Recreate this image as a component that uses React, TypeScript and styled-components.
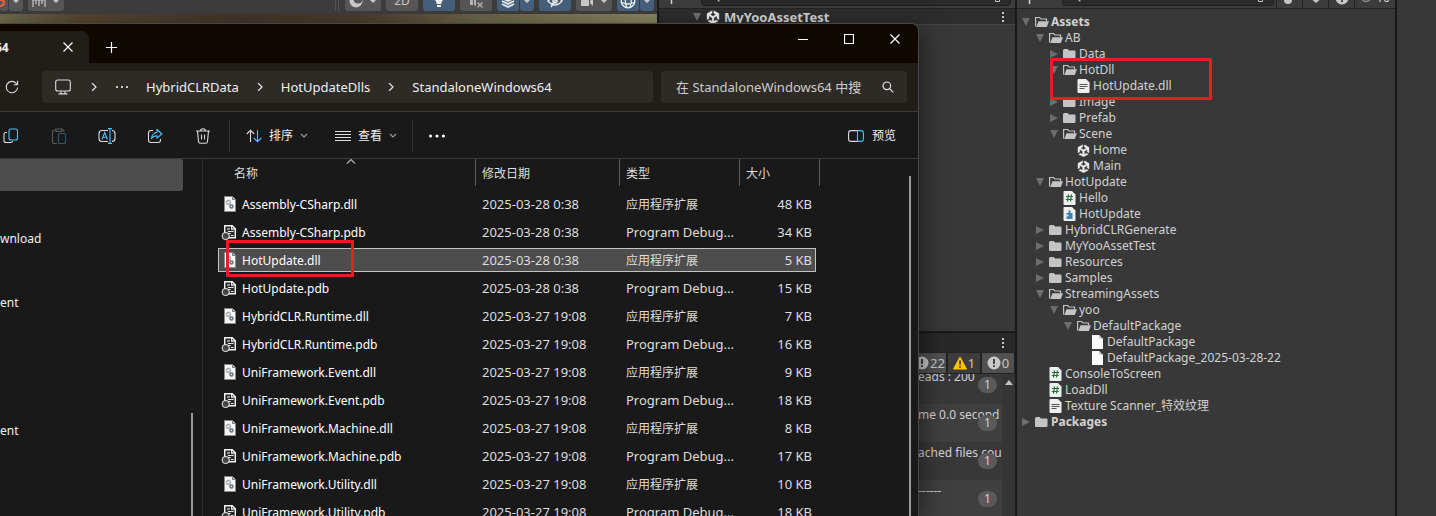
import React from "react";
import styled, { createGlobalStyle, css } from "styled-components";

const GlobalStyle = createGlobalStyle`
  * { box-sizing: border-box; }
  body {
    margin: 0;
    background: #383838;
    color: #d2d2d2;
    font-family: "Noto Sans", "Noto Sans CJK SC", sans-serif;
    font-size: 12px;
  }
  button, input { font: inherit; color: inherit; }
  button { border: 0; padding: 0; background: none; }
  ul { list-style: none; margin: 0; padding: 0; }
  svg { display: block; flex: none; }
`;

/* ---------- editor shell ---------- */

const Editor = styled.main`
  position: relative;
  display: grid;
  grid-template-columns: minmax(0, 1fr) 358px 380px 39px;
  height: 100vh;
  min-height: 440px;
  overflow: hidden;
`;

const Pane = styled.section`
  display: flex;
  flex-direction: column;
  min-width: 0;
  min-height: 0;
  background: #383838;
  border-right: 2px solid #191919;
`;

const SidePane = styled.aside`
  background: #383838;
`;

const SceneToolbar = styled.div`
  display: flex;
  align-items: flex-end;
  gap: 5px;
  height: 14px;
  padding: 0 3px 3px 0;
  overflow: hidden;
  background: #3d3d3d;
`;

const ToolGroup = styled.div`
  display: flex;
  gap: 1px;
`;

const ToolButton = styled.button<{ $w: number; $on?: boolean }>`
  display: flex;
  align-items: center;
  justify-content: center;
  gap: 6px;
  width: ${(p) => p.$w}px;
  height: 20px;
  border-radius: 3px;
  background: ${(p) => (p.$on ? "#46607c" : "#575757")};
  color: #c8c8c8;
  line-height: 16px;
`;

const Grip = styled.span`
  width: 4px;
  height: 20px;
  margin-left: auto;
  margin-right: 1px;
  border: solid #555;
  border-width: 0 1px;
`;

const SceneView = styled.div`
  flex: 1;
  background: linear-gradient(90deg, #6d6a4c 0, #54462f 80px, #40352a 240px, #4a3d2c 360px, #6a6448 480px, #85845f 100%);
`;

const PaneToolbar = styled.div`
  display: flex;
  align-items: flex-end;
  height: 9px;
  overflow: hidden;
  background: #3c3c3c;
  border-bottom: 1px solid #232323;
`;

const PlusSlot = styled.button`
  display: flex;
  align-items: center;
  justify-content: center;
  width: 24px;
  height: 20px;
`;

const SearchField = styled.div<{ $ml: number; $mr: number }>`
  display: flex;
  align-items: center;
  justify-content: space-between;
  flex: 1;
  height: 20px;
  margin: 0 ${(p) => p.$mr}px 2px ${(p) => p.$ml}px;
  padding: 0 3px 0 6px;
  border: 1px solid #1f1f1f;
  border-radius: 4px;
  background: #2a2a2a;
`;

const ToolbarSlot = styled.div<{ $w: number }>`
  display: flex;
  align-items: center;
  justify-content: center;
  gap: 4px;
  width: ${(p) => p.$w}px;
  height: 21px;
  border-left: 1px solid #232323;
  line-height: 16px;
`;

/* ---------- hierarchy ---------- */

const SceneHeader = styled.div`
  display: flex;
  align-items: center;
  height: 16px;
  gap: 4px;
  padding: 0 10px 0 33px;
  background: #2d2d2d;
  border-bottom: 1px solid #454545;
  font-size: 13px;
  font-weight: 700;
  line-height: 16px;
`;

const SceneName = styled.span`
  flex: 1;
`;

const HierarchyBody = styled.div`
  height: 308px;
  border-bottom: 2px solid #191919;
`;

/* ---------- console ---------- */

const ConsoleTab = styled.div`
  display: flex;
  align-items: center;
  justify-content: flex-end;
  height: 19px;
  padding-right: 10px;
  background: #282828;
`;

const ConsoleBar = styled.div`
  display: flex;
  justify-content: flex-end;
  gap: 2px;
  height: 22px;
  padding: 1px 1px 1px 0;
  background: #232323;
`;

const CountToggle = styled.button<{ $on?: boolean }>`
  display: flex;
  align-items: center;
  justify-content: center;
  gap: 1px;
  width: 32px;
  height: 20px;
  background: ${(p) => (p.$on ? "#505050" : "#3c3c3c")};
  color: #c4c4c4;
  font-size: 13px;
  line-height: 16px;
`;

const ConsoleBody = styled.div`
  display: flex;
  flex: 1;
  min-height: 0;
`;

const LogList = styled.ul`
  flex: 1;
  overflow: hidden;
`;

const LogRow = styled.li<{ $first?: boolean }>`
  position: relative;
  height: ${(p) => (p.$first ? 30 : 38)}px;
  padding-left: 259px;
  overflow: hidden;
  white-space: nowrap;
  line-height: 22px;
  background: #383838;
  &:nth-child(even) { background: #3f3f3f; }
  ${(p) =>
    p.$first &&
    css`
      line-height: 6px;
    `}
`;

const LogBadge = styled.span`
  position: absolute;
  right: 5px;
  bottom: 11px;
  width: 19px;
  height: 16px;
  border-radius: 8px;
  background: #5a5a5a;
  text-align: center;
  font-size: 12px;
  line-height: 16px;
`;

const ConsoleScroll = styled.div`
  display: flex;
  justify-content: center;
  width: 13px;
  padding-top: 6px;
  background: #353535;
`;

/* ---------- project tree ---------- */

const TreeArea = styled.div`
  position: relative;
  padding-top: 5px;
`;

const TreeRow = styled.li<{ $depth: number }>`
  display: flex;
  align-items: center;
  height: 16px;
  padding-left: ${(p) => 3 + p.$depth * 14}px;
  font-size: 12px;
  font-weight: ${(p) => (p.$depth === 0 ? 700 : 400)};
  line-height: 16px;
  white-space: nowrap;
`;

const ArrowSlot = styled.span`
  display: flex;
  justify-content: center;
  width: 12px;
  margin-right: 3px;
`;

const IconSlot = styled.span`
  display: flex;
  width: 16px;
`;

const Highlight = styled.div<{ $x: number; $y: number; $w: number; $h: number }>`
  position: absolute;
  left: ${(p) => p.$x}px;
  top: ${(p) => p.$y}px;
  width: ${(p) => p.$w}px;
  height: ${(p) => p.$h}px;
  border: 3px solid #ed1c24;
  pointer-events: none;
`;

/* ---------- file explorer window ---------- */

const Explorer = styled.section`
  position: absolute;
  top: 23px;
  bottom: 0;
  left: 0;
  right: 517px;
  display: flex;
  flex-direction: column;
  border: solid #474747;
  border-width: 1px 1px 0 0;
  border-top-right-radius: 8px;
  overflow: hidden;
  background: #191919;
  color: #f0f0f0;
`;

const ExplorerShadow = styled.div`
  position: absolute;
  top: 30px;
  bottom: 0;
  left: 0;
  right: 518px;
  box-shadow: 2px 2px 22px 2px rgba(0, 0, 0, 0.5);
`;

const TitleBar = styled.header`
  display: flex;
  align-items: flex-end;
  height: 39px;
  background: #0f0800;
`;

const ActiveTab = styled.div`
  display: flex;
  align-items: center;
  justify-content: space-between;
  width: 89px;
  height: 32px;
  padding-right: 16px;
  border-top-right-radius: 8px;
  background: #211d19;
  font-weight: 700;
  text-indent: -5px;
`;

const IconButton = styled.button<{ $w: number; $h: number }>`
  display: flex;
  align-items: center;
  justify-content: center;
  width: ${(p) => p.$w}px;
  height: ${(p) => p.$h}px;
`;

const WindowControls = styled.div`
  display: flex;
  align-self: flex-start;
  margin-left: auto;
`;

const NavBar = styled.nav`
  display: flex;
  align-items: center;
  gap: 8px;
  height: 49px;
  padding-right: 11px;
  background: #211d19;
  border-bottom: 1px solid #3a3835;
`;

const RefreshSlot = styled.div`
  width: 34px;
`;

const AddressBar = styled.div`
  display: flex;
  align-items: center;
  flex: 1;
  height: 32px;
  border-radius: 4px;
  background: #2e2a26;
  font-size: 13px;
`;

const Crumb = styled.a`
  color: inherit;
  text-decoration: none;
  white-space: nowrap;
`;

const CrumbArrow = styled.span<{ $w: number }>`
  display: flex;
  justify-content: center;
  width: ${(p) => p.$w}px;
`;

const CrumbMore = styled(CrumbArrow)`
  margin-right: 6px;
`;

const SearchBox = styled.label`
  display: flex;
  align-items: center;
  justify-content: space-between;
  width: 246px;
  height: 32px;
  padding: 0 13px 0 15px;
  border-radius: 4px;
  background: #2e2a26;
`;

const SearchInput = styled.input`
  width: 186px;
  padding: 0;
  border: 0;
  outline: 0;
  background: none;
  font-size: 13px;
  &::placeholder { color: #cfcdcb; opacity: 1; }
`;

const CommandBar = styled.div`
  display: flex;
  align-items: center;
  height: 47px;
  padding-top: 2px;
  border-bottom: 1px solid #3a3a3a;
`;

const CommandGroup = styled.div`
  display: flex;
  gap: 16px;
  margin-left: -5px;
`;

const CommandRule = styled.span<{ $ml: number }>`
  width: 1px;
  height: 32px;
  margin-left: ${(p) => p.$ml}px;
  background: #333;
`;

const TextCommand = styled.button<{ $ml: number }>`
  display: flex;
  align-items: center;
  gap: 7px;
  height: 32px;
  margin-left: ${(p) => p.$ml}px;
  line-height: 16px;
`;

const PreviewCommand = styled(TextCommand)`
  gap: 8px;
  margin-left: auto;
  margin-right: 22px;
`;

const ExplorerBody = styled.div`
  display: flex;
  flex: 1;
  min-height: 0;
`;

const NavTree = styled.ul`
  position: relative;
  width: 203px;
  flex: none;
  border-right: 1px solid #2d2d2d;
`;

const NavItem = styled.li<{ $selected?: boolean }>`
  width: 183px;
  height: 32px;
  line-height: 32px;
  border-radius: 0 2px 2px 0;
  background: ${(p) => (p.$selected ? "#4d4d4d" : "none")};
`;

const ScrollThumb = styled.span<{ $top: number; $right: number }>`
  position: absolute;
  top: ${(p) => p.$top}px;
  right: ${(p) => p.$right}px;
  bottom: 0;
  width: 2px;
  background: #9a9a9a;
`;

const FileArea = styled.div`
  position: relative;
  flex: 1;
  min-width: 0;
  overflow: hidden;
`;

const FileTable = styled.table`
  width: 602px;
  margin-left: 15px;
  table-layout: fixed;
  border-collapse: separate;
  border-spacing: 0;
`;

const HeadCell = styled.th<{ $w: number; $pad: number }>`
  position: relative;
  width: ${(p) => p.$w}px;
  height: 27px;
  padding: 0 0 0 ${(p) => p.$pad}px;
  border-right: 1px solid #5e5e5e;
  text-align: left;
  font-weight: 400;
  color: #dedede;
`;

const SortMark = styled.span`
  position: absolute;
  top: 0;
  right: 119px;
`;

const Cell = styled.td`
  height: 28px;
  padding: 0;
  &:last-child { padding-right: 4px; }
`;

const CellBox = styled.div<{ $selected?: boolean; $edge?: "start" | "end"; $pad?: number }>`
  display: flex;
  align-items: center;
  height: 24px;
  padding: 0 3px 0 ${(p) => p.$pad ?? 6}px;
  border: solid transparent;
  border-width: 1px ${(p) => (p.$edge === "end" ? 1 : 0)}px 1px ${(p) => (p.$edge === "start" ? 1 : 0)}px;
  justify-content: ${(p) => (p.$edge === "end" ? "flex-end" : "flex-start")};
  gap: 5px;
  white-space: nowrap;
  ${(p) =>
    p.$selected &&
    css`
      background: #4d4d4d;
      border-color: #c4c4c4;
    `}
`;

const FileRows = styled.tbody`
  font-size: 13px;
  line-height: 20px;
  color: #dedede;
  &::before { content: ""; display: block; height: 4px; }
`;

const SmallText = styled.span<{ $bright?: boolean }>`
  padding-top: 2px;
  color: ${(p) => (p.$bright ? "#fff" : "inherit")};
  font-size: 12px;
`;

/* ---------- icons ---------- */

const Arrow = ({ open }: { open: boolean }) => (
  <svg width="10" height="10" viewBox="0 0 10 10">
    <path d={open ? "M1 1h8L5 9z" : "M1 1v8l8-4z"} fill="#6e6e6e" />
  </svg>
);

const Caret = () => (
  <svg width="8" height="6" viewBox="0 0 8 6">
    <path d="M0 1h8L4 5z" fill="#c8c8c8" />
  </svg>
);

const FolderIcon = () => (
  <svg width="13" height="12" viewBox="0 0 13 12">
    <path d="M0 2.500Q0 1 1.500 1h3L6 2.500h5.500Q12.500 2.500 12.500 3.500V10q0 1-1 1H1q-1 0-1-1z" fill="#c4c4c4" />
  </svg>
);

const FolderOpenIcon = () => (
  <svg width="15" height="12" viewBox="0 0 15 12">
    <path d="M.6 10.500V1.500h4L6 3h5.500v2" fill="none" stroke="#c4c4c4" strokeWidth="1.200" />
    <path d="M3.500 5.200H14l-2.200 5.800H1.300z" fill="#c4c4c4" />
  </svg>
);

const Page = () => <path d="M1 0h7.500L12 3.500V13q0 1-1 1H1q-1 0-1-1V1q0-1 1-1z" fill="#efefef" />;

const TextDocIcon = () => (
  <svg width="13" height="14" viewBox="0 0 12 14">
    <Page />
    <path d="M2 5.500h8M2 7.500h8M2 9.500h5" stroke="#555" />
  </svg>
);

const BlankDocIcon = () => (
  <svg width="13" height="14" viewBox="0 0 13 14">
    <path d="M1 0h7l4 4v10H1z" fill="#fafafa" />
    <path d="M8.500 0v3.500H12" fill="none" stroke="#bbb" strokeWidth=".8" />
  </svg>
);

const ScriptIcon = () => (
  <svg width="13" height="14" viewBox="0 0 12 14">
    <Page />
    <path d="M5 3.500 4 10.500M8 3.500 7 10.500M2.500 5.500h7M2.200 8.500h7" stroke="#26733a" strokeWidth="1.200" />
  </svg>
);

const AssemblyIcon = () => (
  <svg width="13" height="14" viewBox="0 0 12 14">
    <Page />
    <path d="M5 3.500h2v2.500h2V12H3V6h2z" fill="#3f83ad" />
    <circle cx="4" cy="8.500" r="1" fill="#efefef" />
  </svg>
);

const UnityIcon = ({ size = 13 }: { size?: number }) => (
  <svg width={size} height={size} viewBox="0 0 24 24">
    <path
      d="M13.500 1.200v4.300l3.300 2c.2.100.2.300 0 .4l-4 2.400q-.8.400-1.600 0l-4-2.400c-.2-.1-.2-.3 0-.4l3.300-2V1.200L1.800 6.200v10.400l3.400-2.100v-4c0-.2.200-.3.400-.2l4 2.400q.8.500.8 1.400v4.700c0 .2-.2.300-.4.200l-3.400-2-3.400 2.100L12 23.700l8.800-4.600-3.400-2.100-3.400 2c-.2.100-.4 0-.4-.2v-4.700q0-.9.800-1.400l4-2.400c.2-.1.400 0 .4.200v4l3.400 2.100V6.200z"
      fill="#ededed"
      stroke="#ededed"
      strokeWidth=".6"
    />
  </svg>
);

const KebabIcon = () => (
  <svg width="4" height="12" viewBox="0 0 4 12">
    <path d="M1 1h2v2H1zM1 5h2v2H1zM1 9h2v2H1z" fill="#c4c4c4" />
  </svg>
);

const PickerIcon = () => (
  <svg width="12" height="12" viewBox="0 0 12 12" fill="none" stroke="#c4c4c4">
    <path d="M3.500 5.500v-5h8v8h-6M.5 7.500h4v4h-4zM6 6l3-3" />
  </svg>
);

const PlusIcon = () => (
  <svg width="11" height="11" viewBox="0 0 11 11">
    <path d="M5.500 0v11M0 5.500h11" stroke="#d2d2d2" strokeWidth="1.500" />
  </svg>
);

const LensIcon = ({ size, color }: { size: number; color: string }) => (
  <svg width={size} height={size} viewBox="0 0 12 12" fill="none" stroke={color} strokeWidth="1.200">
    <circle cx="4.800" cy="4.800" r="3.800" />
    <path d="m7.600 7.600 3.700 3.700" />
  </svg>
);

const BubbleIcon = () => (
  <svg width="14" height="14" viewBox="0 0 14 14">
    <circle cx="7" cy="7" r="6.500" fill="#c8c8c8" />
    <path d="M7 3v5M7 9.300v1.700" stroke="#333" strokeWidth="1.800" />
  </svg>
);

const WarnIcon = () => (
  <svg width="14" height="14" viewBox="0 0 14 14">
    <path d="M7 1 13.500 13H.5z" fill="#ffc107" stroke="#ffc107" strokeLinejoin="round" />
    <path d="M7 4.500v4.300M7 10v1.700" stroke="#333" strokeWidth="1.600" />
  </svg>
);

const Chevron = ({ d, w = 8, h = 8, color = "#e6e6e6" }: { d: string; w?: number; h?: number; color?: string }) => (
  <svg width={w} height={h} viewBox={`0 0 ${w} ${h}`}>
    <path d={d} fill="none" stroke={color} strokeWidth="1.200" />
  </svg>
);

const DownMark = () => <Chevron d="M1 2l3 3 3-3" color="#9a9a9a" />;
const RightMark = () => <Chevron d="M2 0l4 4-4 4" />;

const strokeSvg = { fill: "none", stroke: "#dcdcdc", strokeWidth: 1.1 } as const;

const PcIcon = () => (
  <svg width="16" height="16" viewBox="0 0 16 16" {...strokeSvg}>
    <rect x=".7" y="1" width="14.600" height="11" rx="2" />
    <path d="M6 12v2.500M10 12v2.500M3.500 14.900h9" />
  </svg>
);

const RefreshIcon = () => (
  <svg width="14" height="14" viewBox="0 0 14 14" {...strokeSvg}>
    <path d="M12.600 7.500A5.700 5.700 0 1 1 11.200 3.300L12.500 4.700M12.600.8v4H8.700" />
  </svg>
);

const CopyIcon = () => (
  <svg width="16" height="16" viewBox="0 0 16 16" {...strokeSvg}>
    <path d="M4 4.500H3q-2 0-2 2v6q0 2 2 2h4.500q2 0 2-1.500" />
    <rect x="6" y="1" width="8.500" height="11" rx="2" stroke="#4cc2ff" />
  </svg>
);

const PasteIcon = () => (
  <svg width="16" height="16" viewBox="0 0 16 16" {...strokeSvg} stroke="#5c5c5c">
    <path d="M5 2H3q-1.500 0-1.500 1.500V14q0 1.500 1.500 1.500h3M11 2h1.500Q13 2 13 4M5 1h6v2.500H5z" />
    <rect x="7.500" y="5.500" width="7" height="10" rx="1" stroke="#2c5873" />
  </svg>
);

const RenameIcon = () => (
  <svg width="18" height="16" viewBox="0 0 18 16" {...strokeSvg}>
    <path d="M10 2.500H4q-3 0-3 3v5q0 3 3 3h6M14 2.500q3 0 3 3v5q0 3-3 3" />
    <path d="M4 11.500 6.700 4.500 9.400 11.500M5 9.300h3.500M12 1v14M10 .6h4M10 15.400h4" stroke="#4cc2ff" />
  </svg>
);

const ShareIcon = () => (
  <svg width="16" height="16" viewBox="0 0 16 16" {...strokeSvg}>
    <path d="M6 2.500H4q-2.500 0-2.500 2.500v7q0 2.500 2.500 2.500h7q2.500 0 2.500-2.500v-1" />
    <path d="M10 1.500 14.800 6 10 10.200V7.700Q6.500 7.500 4.500 10.500 5 5 10 4.200z" stroke="#4cc2ff" strokeLinejoin="round" />
  </svg>
);

const TrashIcon = () => (
  <svg width="16" height="16" viewBox="0 0 16 16" {...strokeSvg}>
    <path d="M1 3h14M5.500 3Q5.500.8 8 .8T10.500 3M2.500 3l1 10.500q.2 1.800 2 1.800h5q1.800 0 2-1.800l1-10.500M6.500 6.500v5M9.500 6.500v5" />
  </svg>
);

const SortIcon = () => (
  <svg width="16" height="14" viewBox="0 0 16 14" {...strokeSvg}>
    <path d="M4.500 13V1.500M.8 5 4.500 1.300 8.200 5" />
    <path d="M11.500 1v11.500M7.800 9l3.700 3.700L15.200 9" stroke="#4cc2ff" />
  </svg>
);

const LinesIcon = () => (
  <svg width="16" height="12" viewBox="0 0 16 12" {...strokeSvg}>
    <path d="M0 1.500h16M0 4.500h16M0 7.500h16M0 10.500h16" strokeWidth="1" />
  </svg>
);

const DotsIcon = ({ w, r }: { w: number; r: number }) => (
  <svg width={w} height="4" viewBox={`0 0 ${w} 4`} fill="#fff">
    <circle cx={r} cy="2" r={r} />
    <circle cx={w / 2} cy="2" r={r} />
    <circle cx={w - r} cy="2" r={r} />
  </svg>
);

const PreviewIcon = () => (
  <svg width="16" height="12" viewBox="0 0 16 12" {...strokeSvg}>
    <path d="M9.500.6H3Q.6.600.6 3v6Q.6 11.400 3 11.400h6.500" />
    <path d="M9.500.6H13Q15.400.600 15.400 3v6q0 2.400-2.400 2.400H9.500z" stroke="#4cc2ff" />
  </svg>
);

const DllIcon = () => (
  <svg width="14" height="16" viewBox="0 0 14 16">
    <path d="M1.500.5h8l3 3v12h-11z" fill="#f6f6f6" stroke="#8a8a8a" />
    <path d="M9.500.5v3h3" fill="#ccc" stroke="#777" />
    <circle cx="5.500" cy="6.500" r="1.900" fill="none" stroke="#a9afb8" strokeWidth="1.500" />
    <circle cx="8.500" cy="10.500" r="1.500" fill="none" stroke="#68717c" strokeWidth="1.500" />
  </svg>
);

const PdbIcon = () => (
  <svg width="14" height="16" viewBox="0 0 14 16" overflow="visible">
    <path d="M1.700 1.700h7.500l3.100 3.100v9H1.700z" fill="#2a2a2a" stroke="#f2f2f2" strokeWidth="1.400" />
    <path d="M8.700 1.500v3.700h3.700M4 5h3M5 7.500h5.500M5 9.500h2.500M8 11.500h2.500" fill="none" stroke="#f2f2f2" strokeWidth="1.200" />
    <circle cx="2.700" cy="12" r="3.600" fill="#444" stroke="#f2f2f2" />
  </svg>
);

/* ---------- data ---------- */

type Kind = "open" | "closed" | "script" | "assembly" | "text" | "blank" | "unity";
const tree: [number, Kind, string][] = [
  [0, "open", "Assets"],
  [1, "open", "AB"],
  [2, "closed", "Data"],
  [2, "open", "HotDll"],
  [3, "text", "HotUpdate.dll"],
  [2, "closed", "Image"],
  [2, "closed", "Prefab"],
  [2, "open", "Scene"],
  [3, "unity", "Home"],
  [3, "unity", "Main"],
  [1, "open", "HotUpdate"],
  [2, "script", "Hello"],
  [2, "assembly", "HotUpdate"],
  [1, "closed", "HybridCLRGenerate"],
  [1, "closed", "MyYooAssetTest"],
  [1, "closed", "Resources"],
  [1, "closed", "Samples"],
  [1, "open", "StreamingAssets"],
  [2, "open", "yoo"],
  [3, "open", "DefaultPackage"],
  [4, "blank", "DefaultPackage"],
  [4, "blank", "DefaultPackage_2025-03-28-22"],
  [1, "script", "ConsoleToScreen"],
  [1, "script", "LoadDll"],
  [1, "text", "Texture Scanner_特效纹理"],
  [0, "closed", "Packages"],
];

const treeIcons: Record<Kind, React.ReactNode> = {
  open: <FolderOpenIcon />,
  closed: <FolderIcon />,
  script: <ScriptIcon />,
  assembly: <AssemblyIcon />,
  text: <TextDocIcon />,
  blank: <BlankDocIcon />,
  unity: <UnityIcon />,
};

const files: [string, string, string][] = [
  ["Assembly-CSharp.dll", "2025-03-28 0:38", "48 KB"],
  ["Assembly-CSharp.pdb", "2025-03-28 0:38", "34 KB"],
  ["HotUpdate.dll", "2025-03-28 0:38", "5 KB"],
  ["HotUpdate.pdb", "2025-03-28 0:38", "15 KB"],
  ["HybridCLR.Runtime.dll", "2025-03-27 19:08", "7 KB"],
  ["HybridCLR.Runtime.pdb", "2025-03-27 19:08", "16 KB"],
  ["UniFramework.Event.dll", "2025-03-27 19:08", "9 KB"],
  ["UniFramework.Event.pdb", "2025-03-27 19:08", "18 KB"],
  ["UniFramework.Machine.dll", "2025-03-27 19:08", "8 KB"],
  ["UniFramework.Machine.pdb", "2025-03-27 19:08", "17 KB"],
  ["UniFramework.Utility.dll", "2025-03-27 19:08", "10 KB"],
  ["UniFramework.Utility.pdb", "2025-03-27 19:08", "18 KB"],
];

const navItems = ["", "", "wnload", "", "ent", "", "", "", "ent"];
const logs = ["eads : 200", "me 0.0 second", "ached files cou", "------"];

/* ---------- sections ---------- */

const ScenePane = () => (
  <Pane>
    <SceneToolbar>
      <ToolGroup>
        <ToolButton $w={8} aria-label="Snap">
          <svg width="8" height="16" viewBox="0 0 8 16">
            <path d="M0 7h1q3 0 3 2.500T1 13H0" fill="none" stroke="#e8613c" strokeWidth="2" />
          </svg>
        </ToolButton>
        <ToolButton $w={14} aria-label="Snap options"><Caret /></ToolButton>
      </ToolGroup>
      <ToolButton $w={36} aria-label="Grid increment">
        <svg width="14" height="14" viewBox="0 0 14 14">
          <path d="M1 13V6h12v7M4 6v4M7 6v6M10 6v4" fill="none" stroke="#c8c8c8" strokeWidth="1.200" />
        </svg>
        <Caret />
      </ToolButton>
      <Grip />
      <ToolButton $w={36} aria-label="Draw mode">
        <svg width="14" height="14" viewBox="0 0 14 14">
          <circle cx="7" cy="7" r="6.500" fill="#c8c8c8" />
          <circle cx="9" cy="5" r="4.500" fill="#555" />
        </svg>
        <Caret />
      </ToolButton>
      <ToolButton $w={32}>2D</ToolButton>
      <ToolButton $w={32} $on aria-label="Lighting">
        <svg width="12" height="16" viewBox="0 0 12 16">
          <path d="M6 1a4.500 4.500 0 0 1 2.500 8v2h-5V9A4.500 4.500 0 0 1 6 1zM4 12h4v2H4z" fill="#eee" />
        </svg>
      </ToolButton>
      <ToolButton $w={32} aria-label="Audio">
        <svg width="14" height="14" viewBox="0 0 14 14">
          <path d="M1 5h3v6H1zM5 5v6l2 1V3z" fill="#b4b4b4" />
          <path d="m8.500 8.500 5 5m0-5-5 5" stroke="#b4b4b4" strokeWidth="1.300" />
        </svg>
      </ToolButton>
      <ToolGroup>
        <ToolButton $w={22} $on aria-label="Effects">
          <svg width="14" height="16" viewBox="0 0 14 16">
            <path d="m1 8 6 3 6-3M1 11l6 3 6-3" fill="none" stroke="#eee" strokeWidth="1.800" />
            <path d="m7 2 6 4-6 3-6-3z" fill="#eee" />
          </svg>
        </ToolButton>
        <ToolButton $w={14} $on aria-label="Effects options"><Caret /></ToolButton>
      </ToolGroup>
      <ToolButton $w={32} $on aria-label="Visibility">
        <svg width="16" height="14" viewBox="0 0 16 14" fill="none" stroke="#eee" strokeWidth="1.400">
          <path d="M1 7q7-8 14 0-7 8-14 0zM12 1 4 13" />
          <circle cx="8" cy="7" r="2" />
        </svg>
      </ToolButton>
      <ToolButton $w={36} aria-label="Camera">
        <svg width="14" height="12" viewBox="0 0 14 12">
          <path d="M1 2h8v9H1zM10 6l3-3v8l-3-3z" fill="#c8c8c8" />
        </svg>
        <Caret />
      </ToolButton>
      <ToolGroup>
        <ToolButton $w={22} $on aria-label="Gizmos">
          <svg width="16" height="16" viewBox="0 0 16 16" fill="none" stroke="#eee" strokeWidth="1.300">
            <circle cx="8" cy="8" r="6.800" />
            <path d="M1 9q7 4 14 0M6 1.500q-2 7 1 13M10 1.500q2.500 6 0 13" />
          </svg>
        </ToolButton>
        <ToolButton $w={14} $on aria-label="Gizmo options"><Caret /></ToolButton>
      </ToolGroup>
    </SceneToolbar>
    <SceneView />
  </Pane>
);

const HierarchyPane = () => (
  <Pane>
    <PaneToolbar>
      <PlusSlot aria-label="Create"><PlusIcon /></PlusSlot>
      <SearchField $ml={18} $mr={4}>
        <LensIcon size={12} color="#c4c4c4" />
        <PickerIcon />
      </SearchField>
    </PaneToolbar>
    <SceneHeader>
      <Arrow open />
      <UnityIcon size={14} />
      <SceneName>MyYooAssetTest</SceneName>
      <KebabIcon />
    </SceneHeader>
    <HierarchyBody />
    <ConsoleTab><KebabIcon /></ConsoleTab>
    <ConsoleBar>
      <CountToggle $on><BubbleIcon />22</CountToggle>
      <CountToggle><WarnIcon />1</CountToggle>
      <CountToggle $on><BubbleIcon />0</CountToggle>
    </ConsoleBar>
    <ConsoleBody>
      <LogList>
        {logs.map((text, i) => (
          <LogRow key={text} $first={i === 0}>
            {text}
            <LogBadge>1</LogBadge>
          </LogRow>
        ))}
      </LogList>
      <ConsoleScroll>
        <svg width="8" height="5" viewBox="0 0 8 5"><path d="M0 5h8L4 0z" fill="#c4c4c4" /></svg>
      </ConsoleScroll>
    </ConsoleBody>
  </Pane>
);

const ProjectPane = () => (
  <Pane>
    <PaneToolbar>
      <PlusSlot aria-label="Create"><PlusIcon /></PlusSlot>
      <SearchField $ml={21} $mr={2}>
        <LensIcon size={12} color="#c4c4c4" />
        <PickerIcon />
      </SearchField>
      <ToolbarSlot $w={26}>
        <svg width="12" height="12" viewBox="0 0 12 12"><circle cx="4" cy="8" r="4" fill="#c4c4c4" /></svg>
      </ToolbarSlot>
      <ToolbarSlot $w={26}>
        <svg width="12" height="12" viewBox="0 0 12 12"><path d="M6 0l6 6-6 5-6-5z" fill="#c4c4c4" /></svg>
      </ToolbarSlot>
      <ToolbarSlot $w={26}><BubbleIcon /></ToolbarSlot>
      <ToolbarSlot $w={41}>
        <svg width="12" height="10" viewBox="0 0 12 10" fill="none" stroke="#8a8a8a" strokeWidth="1.500">
          <path d="M1 5q5-7 10 0-5 7-10 0z" />
        </svg>
        16
      </ToolbarSlot>
    </PaneToolbar>
    <TreeArea>
      <ul>
        {tree.map(([depth, kind, label], i) => (
          <TreeRow key={i} $depth={depth}>
            <ArrowSlot>{(kind === "open" || kind === "closed") && <Arrow open={kind === "open"} />}</ArrowSlot>
            <IconSlot>{treeIcons[kind]}</IconSlot>
            {label}
          </TreeRow>
        ))}
      </ul>
      <Highlight $x={33} $y={49} $w={162} $h={42} />
    </TreeArea>
  </Pane>
);

const ExplorerWindow = () => (
  <Explorer>
    <TitleBar>
      <ActiveTab>
        64
        <IconButton $w={10} $h={32} aria-label="Close tab">
          <Chevron w={10} h={10} d="M.5.5l9 9M9.500.5l-9 9" color="#fff" />
        </IconButton>
      </ActiveTab>
      <IconButton $w={44} $h={32} aria-label="New tab">
        <Chevron w={11} h={11} d="M5.500 0v11M0 5.500h11" color="#fff" />
      </IconButton>
      <WindowControls>
        <IconButton $w={46} $h={29} aria-label="Minimize">
          <Chevron w={10} h={10} d="M0 5.500h10" color="#fff" />
        </IconButton>
        <IconButton $w={46} $h={29} aria-label="Maximize">
          <Chevron w={10} h={10} d="M.5.5h9v9h-9z" color="#fff" />
        </IconButton>
        <IconButton $w={46} $h={29} aria-label="Close">
          <Chevron w={10} h={10} d="M.5.5l9 9M9.500.5l-9 9" color="#fff" />
        </IconButton>
      </WindowControls>
    </TitleBar>
    <NavBar>
      <RefreshSlot>
        <IconButton $w={24} $h={32} aria-label="Refresh">
          <RefreshIcon />
        </IconButton>
      </RefreshSlot>
      <AddressBar>
        <CrumbArrow $w={42}><PcIcon /></CrumbArrow>
        <CrumbArrow $w={20}><RightMark /></CrumbArrow>
        <CrumbMore $w={36}><DotsIcon w={12} r={1} /></CrumbMore>
        <Crumb href="#data">HybridCLRData</Crumb>
        <CrumbArrow $w={42}><RightMark /></CrumbArrow>
        <Crumb href="#dlls">HotUpdateDlls</Crumb>
        <CrumbArrow $w={42}><RightMark /></CrumbArrow>
        <Crumb href="#win">StandaloneWindows64</Crumb>
      </AddressBar>
      <SearchBox>
        <SearchInput aria-label="搜索" placeholder="在 StandaloneWindows64 中搜索" />
        <LensIcon size={12} color="#e6e6e6" />
      </SearchBox>
    </NavBar>
    <CommandBar>
      <CommandGroup>
        <IconButton $w={32} $h={32} aria-label="复制"><CopyIcon /></IconButton>
        <IconButton $w={32} $h={32} aria-label="粘贴" disabled><PasteIcon /></IconButton>
        <IconButton $w={32} $h={32} aria-label="重命名"><RenameIcon /></IconButton>
        <IconButton $w={32} $h={32} aria-label="共享"><ShareIcon /></IconButton>
        <IconButton $w={32} $h={32} aria-label="删除"><TrashIcon /></IconButton>
      </CommandGroup>
      <CommandRule $ml={10} />
      <TextCommand $ml={16}><SortIcon />排序<DownMark /></TextCommand>
      <TextCommand $ml={27}><LinesIcon />查看<DownMark /></TextCommand>
      <CommandRule $ml={15} />
      <TextCommand $ml={16} aria-label="更多"><DotsIcon w={16} r={1.6} /></TextCommand>
      <PreviewCommand $ml={0}><PreviewIcon />预览</PreviewCommand>
    </CommandBar>
    <ExplorerBody>
      <NavTree>
        {navItems.map((text, i) => (
          <NavItem key={i} $selected={i === 0}>{text}</NavItem>
        ))}
        <ScrollThumb as="li" $top={254} $right={9} />
      </NavTree>
      <FileArea>
        <FileTable>
          <thead>
            <tr>
              <HeadCell $w={258} $pad={16}>
                名称
                <SortMark><Chevron w={10} h={5} d="M1 4.500l4-4 4 4" color="#b0b0b0" /></SortMark>
              </HeadCell>
              <HeadCell $w={144} $pad={6}>修改日期</HeadCell>
              <HeadCell $w={120} $pad={6}>类型</HeadCell>
              <HeadCell $w={80} $pad={6}>大小</HeadCell>
            </tr>
          </thead>
          <FileRows>
            {files.map(([name, date, size]) => {
              const dll = name.endsWith(".dll");
              const selected = name === "HotUpdate.dll";
              return (
                <tr key={name}>
                  <Cell>
                    <CellBox $edge="start" $pad={4} $selected={selected}>
                      {dll ? <DllIcon /> : <PdbIcon />}
                      <SmallText $bright>{name}</SmallText>
                    </CellBox>
                  </Cell>
                  <Cell><CellBox $selected={selected}>{date}</CellBox></Cell>
                  <Cell>
                    <CellBox $selected={selected}>
                      {dll ? <SmallText>应用程序扩展</SmallText> : "Program Debug..."}
                    </CellBox>
                  </Cell>
                  <Cell><CellBox $edge="end" $selected={selected}>{size}</CellBox></Cell>
                </tr>
              );
            })}
          </FileRows>
        </FileTable>
        <Highlight $x={23} $y={81} $w={128} $h={37} />
        <ScrollThumb $top={17} $right={7} />
      </FileArea>
    </ExplorerBody>
  </Explorer>
);

export default function App() {
  return (
    <>
      <GlobalStyle />
      <Editor>
        <ScenePane />
        <HierarchyPane />
        <ProjectPane />
        <SidePane />
        <ExplorerShadow />
        <ExplorerWindow />
      </Editor>
    </>
  );
}
